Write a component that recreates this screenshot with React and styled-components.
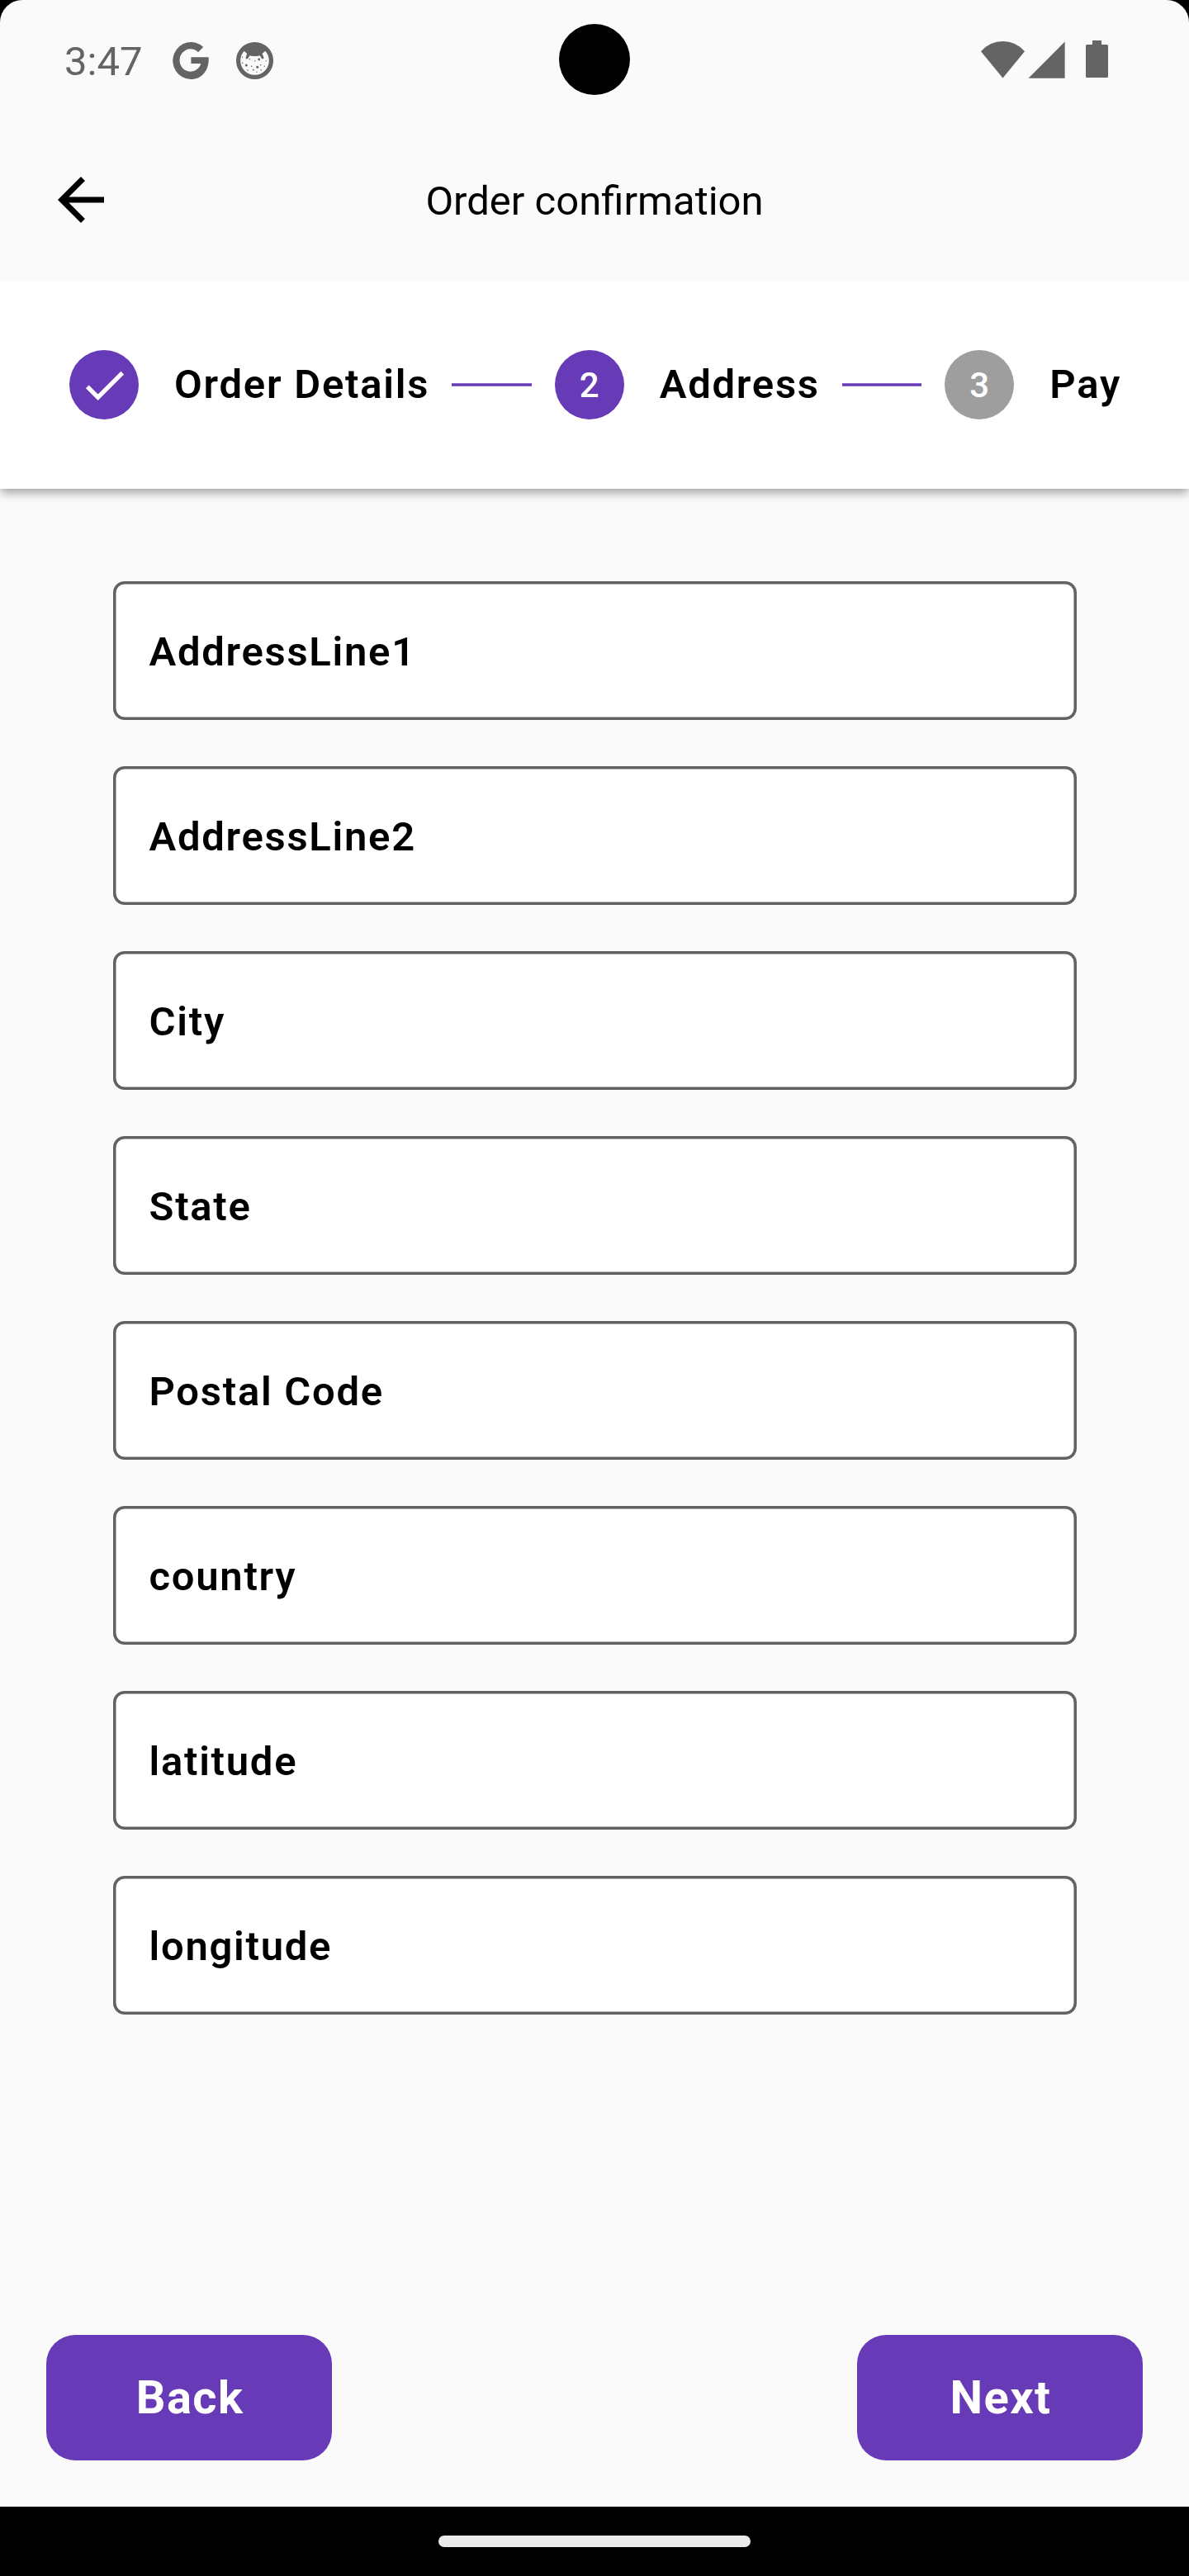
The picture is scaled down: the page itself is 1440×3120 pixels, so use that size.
import React from "react";
import styled, { createGlobalStyle } from "styled-components";

const purple = "#673ab7";
const statusGrey = "#646464";

const GlobalStyle = createGlobalStyle`
  * { box-sizing: border-box; }
  body { margin: 0; background: #000; font-family: Roboto, sans-serif; color: #000; }
`;

const Screen = styled.div`
  position: relative;
  display: flex;
  flex-direction: column;
  width: 1440px;
  height: 3120px;
  background: #000;
`;

const Page = styled.main`
  display: flex;
  flex-direction: column;
  flex: 1;
  background: #fafafa;
  border-radius: 27px 27px 0 0;
`;

const StatusBar = styled.header`
  display: flex;
  justify-content: space-between;
  height: 145px;
  padding: 0 98px 0 78px;
`;

const StatusGroup = styled.div`
  display: flex;
  align-items: center;
  height: 147px;
`;

const Clock = styled.span`
  width: 131px;
  padding-top: 2px;
  font-size: 49px;
  line-height: 58px;
  color: ${statusGrey};
`;

const StatusIcon = styled.svg`
  display: block;
  flex: none;
  width: ${(p) => p.$w}px;
  height: ${(p) => p.$h}px;
  margin-left: ${(p) => p.$gap || 0}px;
  margin-bottom: ${(p) => p.$lift || 0}px;
  fill: ${statusGrey};
`;

const Camera = styled.div`
  position: absolute;
  left: 677px;
  top: 29px;
  width: 86px;
  height: 86px;
  border-radius: 50%;
  background: #000;
`;

const AppBar = styled.div`
  display: grid;
  grid-template-columns: 196px 1fr 196px;
  align-items: center;
  height: 195px;
`;

const BackArrow = styled.svg`
  display: block;
  width: 84px;
  height: 84px;
  margin: 0 0 1px 56px;
`;

const Title = styled.h1`
  margin: 0;
  padding-top: 2px;
  font-size: 49px;
  font-weight: 400;
  line-height: 58px;
  text-align: center;
`;

const Stepper = styled.nav`
  display: flex;
  align-items: center;
  height: 252px;
  padding: 0 83px 0 84px;
  background: #fff;
  box-shadow: 0 6px 10px -1px rgba(0, 0, 0, 0.3), 0 6px 20px rgba(0, 0, 0, 0.06);
  clip-path: inset(0 0 -40px 0);
`;

const Badge = styled.span`
  display: flex;
  align-items: center;
  justify-content: center;
  flex: none;
  width: 84px;
  height: 84px;
  border-radius: 50%;
  background: ${(p) => (p.$active ? purple : "#9e9e9e")};
  color: #fff;
`;

const StepNumber = styled.span`
  padding-top: 2px;
  font-size: 42px;
  font-weight: 500;
  line-height: 50px;
`;

const CheckIcon = styled.svg`
  display: block;
  width: 63px;
  height: 63px;
  fill: #fff;
`;

const StepLabel = styled.span`
  margin: 0 -1px 0 43px;
  font-size: 49px;
  font-weight: 600;
  line-height: 70px;
  letter-spacing: 1.75px;
  white-space: nowrap;
`;

const Connector = styled.span`
  flex: 1;
  height: 4px;
  margin: 0 28px;
  background: ${purple};
  border: solid #8d6bc9;
  border-width: 1px 0;
`;

const Form = styled.form`
  display: flex;
  flex-direction: column;
  gap: 56px;
  padding: 112px 136.5px 0;
`;

const Field = styled.label`
  display: flex;
  align-items: center;
  height: 168px;
  padding: 2px 44px 0;
  background: #fff;
  border-radius: 14px;
  box-shadow: inset 0 0 0 3.5px #616161;
  font-size: 49px;
  font-weight: 600;
  letter-spacing: 1.72px;
`;

const Actions = styled.footer`
  display: flex;
  justify-content: space-between;
  margin-top: auto;
  padding: 0 56px 56px;
`;

const ActionButton = styled.button`
  width: 346px;
  height: 152px;
  padding: 0 0 0 2px;
  border: 0;
  border-radius: 35px;
  background: ${purple};
  color: #fff;
  font-family: inherit;
  font-size: 56px;
  font-weight: 700;
  letter-spacing: 1.4px;
`;

const GestureBar = styled.div`
  display: flex;
  align-items: center;
  justify-content: center;
  height: 84px;
`;

const Handle = styled.div`
  width: 378px;
  height: 14px;
  border-radius: 7px;
  background: #ebebeb;
`;

const fields = ["AddressLine1", "AddressLine2", "City", "State", "Postal Code", "country", "latitude", "longitude"];

const speckles = [
  [12.3, 28, 1.5], [27.7, 21, 1.4], [25.7, 30.2, 1.5],
  [16.4, 20.8, 0.8], [7.7, 18.3, 0.7], [7.7, 25.3, 0.8], [22.7, 22.7, 0.8],
  [18.7, 29.3, 0.8], [29.7, 27.7, 0.8], [34.3, 29.3, 0.7], [36.3, 22.7, 0.6],
  [14, 34, 0.8], [21, 33.7, 0.9], [25, 36.3, 0.7], [30.3, 33.7, 0.8],
];

export default function App() {
  return (
    <>
      <GlobalStyle />
      <Screen>
        <Page>
          <StatusBar>
            <StatusGroup>
              <Clock>3:47</Clock>
              <StatusIcon $w={44} $h={45} viewBox="0 0 44 45">
                <path d="M22.4 18.2H43.6C44.8 32.5 36.5 45 22 45A22 22.5 0 1 1 37.2 6L31 12.2A13.2 13.7 0 1 0 34.4 26H22.4Z" />
              </StatusIcon>
              <StatusIcon $w={45} $h={45} $gap={33} viewBox="0 0 45 45">
                <circle cx="22.5" cy="22.5" r="19.9" fill="none" stroke={statusGrey} strokeWidth="5.2" />
                <path d="M9 10.3Q8 5 12 4Q22.5 -2 33 4Q37 5 36 10.3L31.5 14L33.6 19Q32.6 21.5 30.7 19.5L28.7 16.2Q22.5 18 16.5 16.2L14.5 19.5Q12 21.5 11.5 19L13.2 14Z" />
                {speckles.map(([x, y, r]) => <circle key={`${x}-${y}`} cx={x} cy={y} r={r} />)}
              </StatusIcon>
            </StatusGroup>
            <StatusGroup>
              <StatusIcon $w={53} $h={45} $lift={2} viewBox="0 0 53 45">
                <path d="M0 12.2Q11 .1 26.5 .1T53 12.2L26.5 44.5Z" />
              </StatusIcon>
              <StatusIcon $w={45} $h={45} $gap={4} $lift={2} viewBox="0 0 45 45">
                <path d="M44.6 .5V44.7H.5Z" />
              </StatusIcon>
              <StatusIcon $w={27} $h={45} $gap={25} $lift={4} viewBox="0 0 27 45">
                <path d="M8 0H19V5H25.5Q27 5 27 6.5V43.5Q27 45 25.5 45H1.5Q0 45 0 43.5V6.5Q0 5 1.5 5H8Z" />
              </StatusIcon>
            </StatusGroup>
          </StatusBar>
          <AppBar>
            <BackArrow viewBox="0 0 24 24"><path d="M20 11H7.83l5.59-5.59L12 4l-8 8 8 8 1.41-1.41L7.83 13H20v-2z" /></BackArrow>
            <Title>Order confirmation</Title>
          </AppBar>
          <Stepper>
            <Badge $active>
              <CheckIcon viewBox="0 0 24 24"><path d="M9 16.2L4.8 12l-1.4 1.4L9 19 21 7l-1.4-1.4L9 16.2z" /></CheckIcon>
            </Badge>
            <StepLabel>Order Details</StepLabel>
            <Connector />
            <Badge $active><StepNumber>2</StepNumber></Badge>
            <StepLabel>Address</StepLabel>
            <Connector />
            <Badge><StepNumber>3</StepNumber></Badge>
            <StepLabel>Pay</StepLabel>
          </Stepper>
          <Form>
            {fields.map((name) => <Field key={name}>{name}</Field>)}
          </Form>
          <Actions>
            <ActionButton>Back</ActionButton>
            <ActionButton>Next</ActionButton>
          </Actions>
        </Page>
        <GestureBar><Handle /></GestureBar>
        <Camera />
      </Screen>
    </>
  );
}
